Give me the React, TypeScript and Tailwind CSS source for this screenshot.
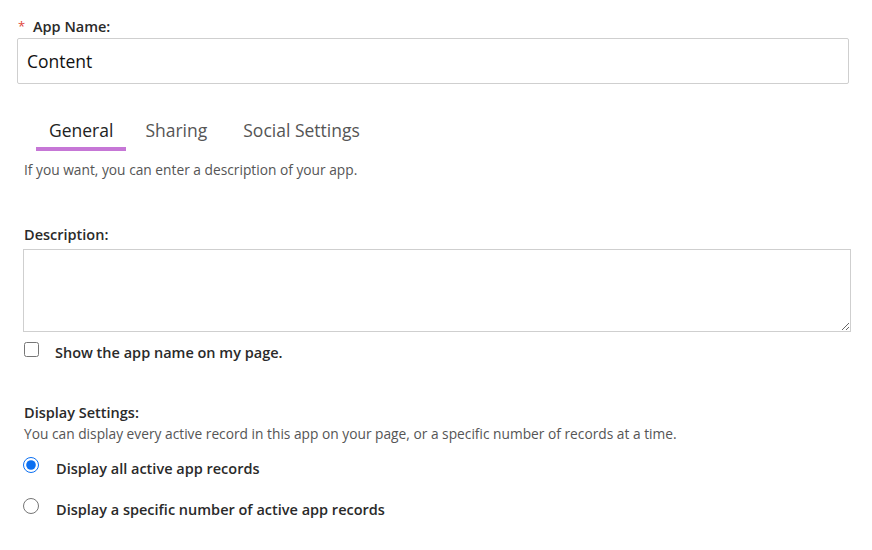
import React, { useState } from 'react';

const tabs = [
  { name: 'General', gap: 'mr-[6px]' },
  { name: 'Sharing', gap: 'mr-[10px]' },
  { name: 'Social Settings', gap: '' },
];

const App: React.FC = () => {
  const [tab, setTab] = useState('General');
  const [mode, setMode] = useState<'all' | 'specific'>('all');

  return (
    <div className="w-[872px] h-[550px] bg-white pl-[17px] pr-[23px] pt-[17px] font-['Open_Sans',sans-serif] text-[#2a2a2a]">
      <label className="flex items-center h-5 text-[14.5px] font-semibold text-[#2a2a2a]">
        <span className="text-[#e0463a] text-[13px] font-normal w-4 pl-[1px]">*</span>
        <span>App Name:</span>
      </label>
      <input
        defaultValue="Content"
        className="mt-[1px] w-[832px] h-[46px] border border-[#cfcfcf] rounded-[2px] px-[9px] text-[17.5px] text-[#111] outline-none"
      />

      <div className="flex mt-[34px] ml-[19px]">
        {tabs.map((t) => (
          <button
            key={t.name}
            onClick={() => setTab(t.name)}
            className={`px-[13px] pb-[5px] text-[17.5px] leading-[24px] border-b-4 ${t.gap} ${
              t.name === tab ? 'text-[#222] border-[#c677d6]' : 'text-[#555] border-transparent'
            }`}
          >
            {t.name}
          </button>
        ))}
      </div>

      <div className="pl-[7px]">
        <p className="mt-[10px] text-[13.75px] leading-[18px] text-[#555]">
          If you want, you can enter a description of your app.
        </p>

        <label className="block mt-[46px] text-[14.5px] font-semibold leading-5">Description:</label>
        <textarea className="block mt-[4px] -ml-[1px] w-[828px] h-[83px] border border-[#cfcfcf] outline-none resize-y" />

        <label className="flex items-center mt-[9px] h-6 text-[14.5px] font-semibold">
          <input type="checkbox" className="w-[15px] h-[15px] m-0 mr-[16px] -translate-y-[4px]" />
          <span>Show the app name on my page.</span>
        </label>

        <p className="mt-[38px] text-[14.5px] font-semibold leading-5">Display Settings:</p>
        <p className="mt-[2px] text-[13.75px] leading-[18px] text-[#555]">
          You can display every active record in this app on your page, or a specific number of records at a time.
        </p>

        <label className="flex items-center mt-[14px] h-6 text-[14.5px] font-semibold">
          <input
            type="radio"
            name="display"
            checked={mode === 'all'}
            onChange={() => setMode('all')}
            className="w-4 h-4 m-0 mr-[17px] -ml-[1px] -translate-y-[4px] accent-[#0b6ff1]"
          />
          <span>Display all active app records</span>
        </label>
        <label className="flex items-center mt-[17px] h-6 text-[14.5px] font-semibold">
          <input
            type="radio"
            name="display"
            checked={mode === 'specific'}
            onChange={() => setMode('specific')}
            className="w-4 h-4 m-0 mr-[17px] -ml-[1px] -translate-y-[4px]"
          />
          <span>Display a specific number of active app records</span>
        </label>
      </div>
    </div>
  );
};

export default App;
